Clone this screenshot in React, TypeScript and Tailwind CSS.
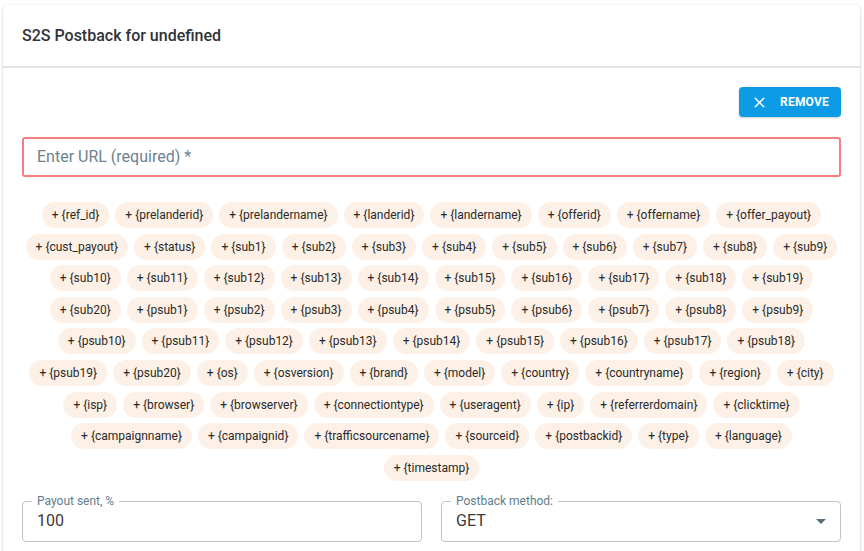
import { X } from "lucide-react"

const params = [
  "ref_id", "prelanderid", "prelandername", "landerid", "landername", "offerid", "offername", "offer_payout",
  "cust_payout", "status", "sub1", "sub2", "sub3", "sub4", "sub5", "sub6", "sub7", "sub8", "sub9",
  "sub10", "sub11", "sub12", "sub13", "sub14", "sub15", "sub16", "sub17", "sub18", "sub19",
  "sub20", "psub1", "psub2", "psub3", "psub4", "psub5", "psub6", "psub7", "psub8", "psub9",
  "psub10", "psub11", "psub12", "psub13", "psub14", "psub15", "psub16", "psub17", "psub18",
  "psub19", "psub20", "os", "osversion", "brand", "model", "country", "countryname", "region", "city",
  "isp", "browser", "browserver", "connectiontype", "useragent", "ip", "referrerdomain", "clicktime",
  "campaignname", "campaignid", "trafficsourcename", "sourceid", "postbackid", "type", "language",
  "timestamp",
]

function OutlinedField({ label, value, select }: { label: string; value: string; select?: boolean }) {
  return (
    <div className="relative flex-1">
      <div className="flex h-[41px] items-center rounded-[4px] border border-[#c4c4c4] px-[14px] text-[16px] text-[#3a3a3a]">
        <span className="flex-1">{value}</span>
        {select && (
          <svg width="10" height="5" viewBox="0 0 10 5">
            <path d="M0 0 L10 0 L5 5 Z" fill="#546e7a" />
          </svg>
        )}
      </div>
      <span className="absolute -top-[8px] left-[10px] bg-white px-[5px] text-[12px] leading-[16px] text-[#607d8b]">
        {label}
      </span>
    </div>
  )
}

export default function App() {
  return (
    <div className="min-h-[551px] bg-white pl-[3px] pr-[4px] pt-[5px]" style={{ fontFamily: "Roboto, 'Liberation Sans', sans-serif" }}>
      <div className="rounded-t-[4px] bg-white shadow-[0_1px_3px_rgba(0,0,0,0.22),0_0_1px_rgba(0,0,0,0.12)]">
        {/* Header */}
        <div className="flex h-[63px] items-center border-b-2 border-[#e2e2e2] px-[19px]">
          <h2 className="text-[16px] font-medium text-[#2f3337]">S2S Postback for undefined</h2>
        </div>

        {/* Body */}
        <div className="px-[19px] pt-[19px] pb-[12px]">
          <div className="flex justify-end">
            <button className="flex h-[30px] w-[102px] items-center justify-center gap-[12px] rounded-[4px] bg-[#0d9be5] text-[12px] font-bold tracking-[0.2px] text-white shadow-[0_1px_2px_rgba(0,0,0,0.2)]">
              <X size={17} strokeWidth={2} />
              REMOVE
            </button>
          </div>

          <div className="mt-[20px] flex h-[40px] items-center rounded-[3px] border-2 border-[#f47f7f] px-[13px] text-[16px] text-[#6b8290]">
            Enter URL (required) *
          </div>

          <div className="mt-[25px] flex flex-wrap justify-center gap-x-[6px] gap-y-[5.6px] px-[1px]">
            {params.map((p) => (
              <span
                key={p}
                className="flex h-[26px] items-center rounded-full bg-[#fdf1e7] px-[10px] text-[12px] text-[#2a2a2a]"
              >
                + {`{${p}}`}
              </span>
            ))}
          </div>

          <div className="mt-[20px] flex gap-[19px]">
            <OutlinedField label="Payout sent, %" value="100" />
            <OutlinedField label="Postback method:" value="GET" select />
          </div>
        </div>
      </div>
    </div>
  )
}
